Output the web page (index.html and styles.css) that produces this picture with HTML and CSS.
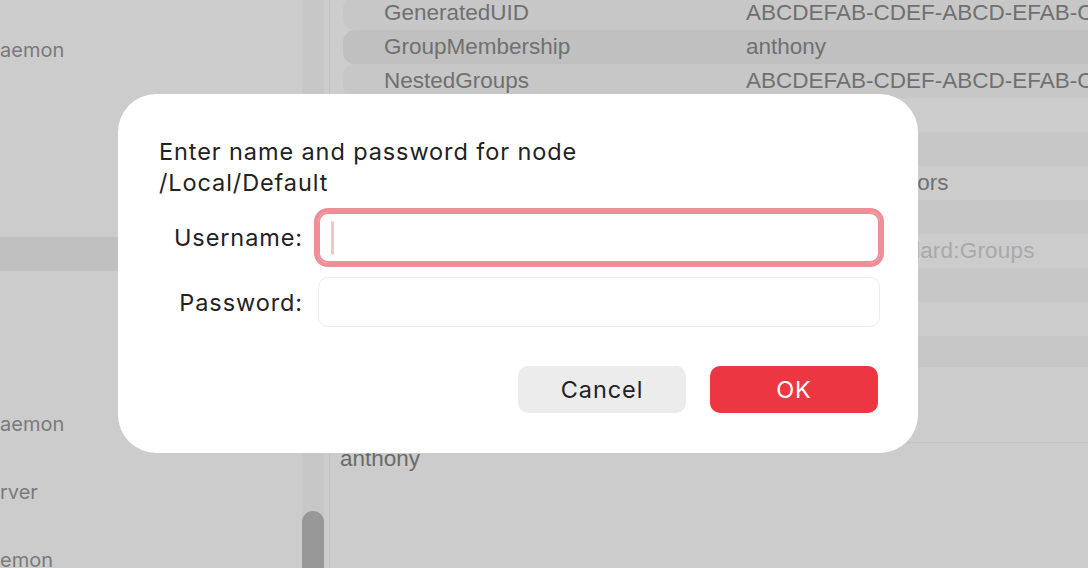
FILE: index.html
```html
<!DOCTYPE HTML>
<html>
	<head>
		<meta charset="utf-8">
		<title>Directory Utility</title>
		<link rel="stylesheet" href="styles.css">
	</head>
	<body>
		<div class="window">
			<div class="sidebar">
				<ul class="records">
					<li></li>
					<li>aemon</li>
					<li></li>
					<li></li>
					<li></li>
					<li></li>
					<li></li>
					<li class="selected"></li>
					<li></li>
					<li></li>
					<li></li>
					<li></li>
					<li>aemon</li>
					<li></li>
					<li>rver</li>
					<li></li>
					<li>emon</li>
				</ul>
			</div>
			<div class="scroller"><div class="thumb"></div></div>
			<div class="split"></div>
			<div class="detail">
				<div class="attrs">
					<div class="attr"><span class="attr-name">GeneratedUID</span><span class="attr-value">ABCDEFAB-CDEF-ABCD-EFAB-CDEFABCDEFAB</span></div>
					<div class="attr selected"><span class="attr-name">GroupMembership</span><span class="attr-value">anthony</span></div>
					<div class="attr"><span class="attr-name">NestedGroups</span><span class="attr-value">ABCDEFAB-CDEF-ABCD-EFAB-CDEFABCDEFAB</span></div>
					<div class="attr"><span class="attr-name">Password</span><span class="attr-value">*</span></div>
					<div class="attr"><span class="attr-name">PrimaryGroupID</span><span class="attr-value">80</span></div>
					<div class="attr"><span class="attr-name">RealName</span><span class="attr-value">Local Administrators</span></div>
					<div class="attr"><span class="attr-name">RecordName</span><span class="attr-value">admin</span></div>
					<div class="attr"><span class="attr-name">RecordType</span><span class="attr-value muted">dsRecTypeStandard:Groups</span></div>
					<div class="attr"><span class="attr-name">SMBSID</span><span class="attr-value">S-1-5-32-544</span></div>
					<div class="attr"></div>
					<div class="attr"></div>
				</div>
				<div class="editor"></div>
				<div class="members">anthony</div>
			</div>
		</div>

		<div class="sheet">
			<div class="sheet-title">Enter name and password for node<br>/Local/Default</div>
			<div class="form">
				<label class="form-label">Username:</label>
				<div class="field focused"><span class="caret"></span></div>
				<label class="form-label">Password:</label>
				<div class="field"></div>
			</div>
			<div class="buttons">
				<button class="button">Cancel</button>
				<button class="button default">OK</button>
			</div>
		</div>
	</body>
</html>
```

FILE: styles.css
```css
html, body {
	margin: 0;
	height: 100%;
	overflow: hidden;
}
body {
	background: #cccccc;
	font-family: Inter, "Noto Sans", sans-serif;
	position: relative;
}
.window {
	display: flex;
	height: 568px;
	overflow: hidden;
}

/* left list */
.sidebar {
	width: 302px;
	flex: none;
	overflow: hidden;
}
.records {
	list-style: none;
	margin: -1px 0 0 0;
	padding: 0;
}
.records li {
	height: 34px;
	line-height: 34px;
	font-size: 20px;
	color: #7a7a7a;
	white-space: nowrap;
}
.records li.selected {
	background: #c0c0c0;
}
.scroller {
	width: 22px;
	flex: none;
	background: #c7c7c7;
	padding-top: 511px;
	box-sizing: border-box;
	overflow: hidden;
}
.thumb {
	height: 90px;
	border-radius: 11px;
	background: #989898;
}
.split {
	width: 6px;
	flex: none;
	border-right: 1px solid #c2c2c2;
	box-sizing: border-box;
	background: #cdcdcd;
}

/* right attributes */
.detail {
	flex: 1;
	min-width: 0;
	font-family: "Liberation Sans", Arial, sans-serif;
	font-size: 22.5px;
	color: #707070;
}
.attrs {
	height: 367px;
	overflow: hidden;
	border-bottom: 1px solid #c3c3c3;
	box-sizing: border-box;
}
.attr {
	display: grid;
	grid-template-columns: 362px auto;
	height: 34px;
	line-height: 34px;
	margin-left: 13px;
	padding-left: 41px;
	border-radius: 12px 0 0 12px;
	white-space: nowrap;
}
.attr:first-child {
	margin-top: -4px;
}
.attr:nth-child(odd) {
	background: #c7c7c7;
}
.attr.selected {
	background: #c0c0c0;
}
.attr-value.muted {
	color: #a9a9a9;
	letter-spacing: 0.2px;
}
.editor {
	height: 76px;
	border-bottom: 1px solid #c3c3c3;
	box-sizing: border-box;
}
.members {
	padding-left: 10px;
	line-height: 31px;
	color: #6a6a6a;
}

/* password sheet */
.sheet {
	position: absolute;
	left: 118px;
	top: 94px;
	width: 800px;
	height: 359px;
	box-sizing: border-box;
	padding: 42px 38px 40px 41px;
	background: #fff;
	border-radius: 38px;
	color: #222;
	font-size: 23.5px;
	letter-spacing: 0.9px;
}
.sheet-title {
	line-height: 31px;
	height: 62px;
}
.form {
	display: grid;
	grid-template-columns: 144px 1fr;
	grid-template-rows: 51px 50px;
	column-gap: 15px;
	row-gap: 14px;
	margin-top: 14px;
	align-items: center;
}
.form-label {
	text-align: right;
}
.field {
	height: 100%;
	box-sizing: border-box;
	border: 1px solid #ededed;
	border-radius: 10px;
	display: flex;
	align-items: center;
	padding-left: 12px;
}
.field.focused {
	border: 2px solid #ee8e96;
	box-shadow: 0 0 0 4px #ee8e96;
	padding-left: 11px;
}
.caret {
	width: 3px;
	height: 34px;
	border-radius: 2px;
	background: #f6c3c8;
}
.buttons {
	display: flex;
	justify-content: flex-end;
	gap: 24px;
	margin-top: 39px;
	margin-right: 2px;
}
.button {
	width: 168px;
	height: 47px;
	border: none;
	border-radius: 10px;
	background: #ececec;
	color: #222;
	font-family: Inter, "Noto Sans", sans-serif;
	font-size: 23.5px;
	letter-spacing: 0.9px;
	padding: 0;
}
.button.default {
	background: #ec3642;
	color: #fff;
}
```
